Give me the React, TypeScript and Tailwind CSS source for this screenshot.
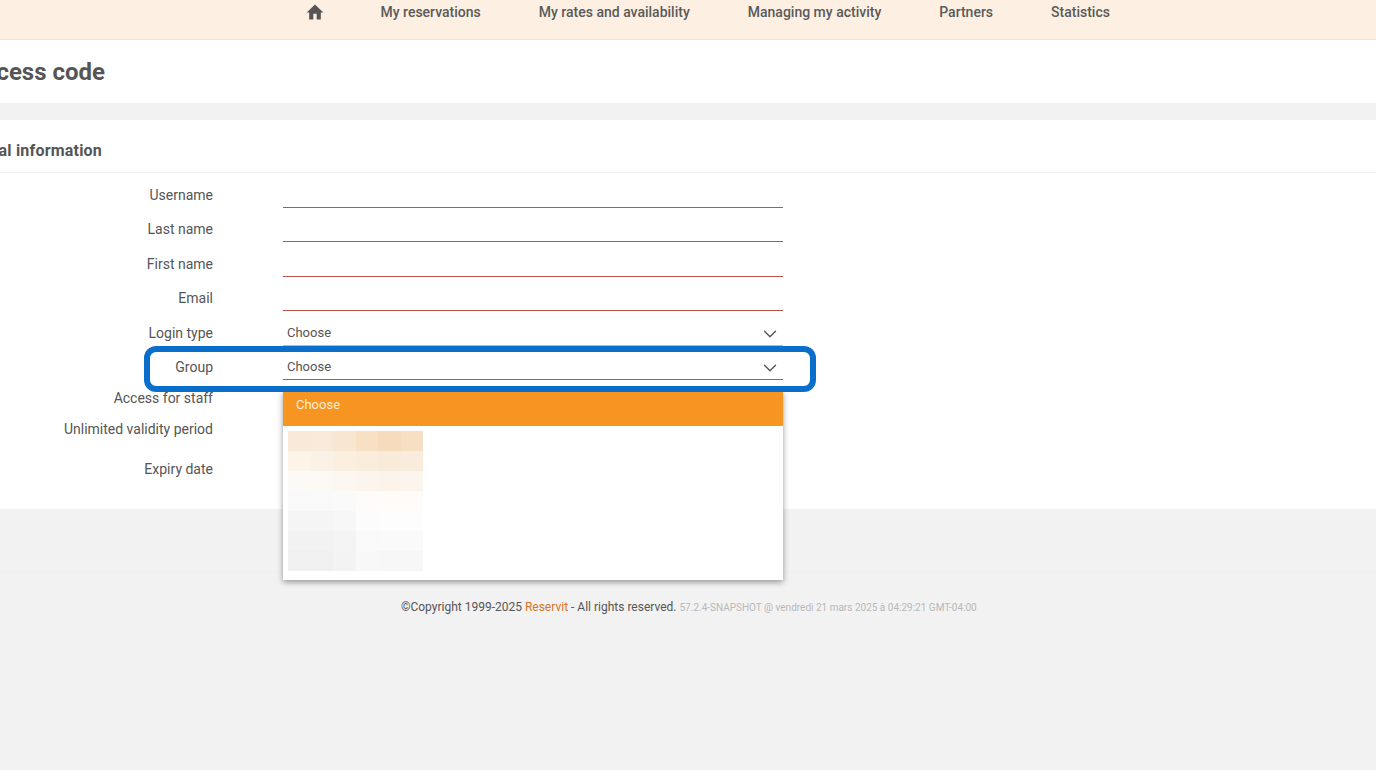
import { ChevronDown } from 'lucide-react'

const navLinks = ['My reservations', 'My rates and availability', 'Managing my activity', 'Partners', 'Statistics']

const textRows = [
  { label: 'Username', cls: 'h-[34px]' },
  { label: 'Last name', cls: 'h-[35px]' },
  { label: 'First name', cls: 'h-[34px]' },
  { label: 'Email', cls: 'h-[35px]' },
]

const mosaic = [
  ['#f9e9d8', '#f9ead9', '#f8e6d0', '#f7e0c4', '#f6dcbc', '#f6dfc2'],
  ['#fcf3e9', '#fbf2e7', '#fbefe0', '#faeddc', '#f9ebd9', '#f9ecdc'],
  ['#fcfaf7', '#fcf9f5', '#fcf7f1', '#fcf5ed', '#fcf4eb', '#fcf5ee'],
  ['#f9f9f9', '#f9f9f9', '#fafafa', '#fdfcfa', '#fefbf8', '#fefcf9'],
  ['#f5f5f5', '#f5f5f5', '#f7f7f7', '#fcfcfc', '#fdfdfd', '#fdfdfd'],
  ['#f2f2f2', '#f2f2f2', '#f4f4f4', '#f9f9f9', '#fafafa', '#fafafa'],
  ['#f0f0f0', '#f0f0f0', '#f3f3f3', '#f8f8f8', '#f7f7f7', '#f7f7f7'],
]

function HomeIcon() {
  return (
    <svg viewBox="0 0 24 24" className="w-[20px] h-[20px] -mt-[2px] fill-[#555]">
      <path d="M10 21v-7h4v7h5v-8.5h3L12 3 2 12.5h3V21z" />
    </svg>
  )
}

function SelectField({ line }: { line: string }) {
  return (
    <div className={`w-[500px] h-[31px] pt-[6px] pl-[4px] pr-[2px] flex items-center justify-between border-b ${line}`}>
      <span className="text-[13px] text-[#555]">Choose</span>
      <ChevronDown className="w-[22px] h-[22px] mt-[1px] text-[#555]" strokeWidth={1.5} />
    </div>
  )
}

export default function App() {
  return (
    <div className="relative w-[1376px] h-[770px] overflow-hidden bg-[#f2f2f2] font-['Roboto',sans-serif] text-[#555]">
      {/* Top nav */}
      <nav className="h-[40px] bg-[#fdf0e2] border-b border-[#ece4da] pl-[305px] flex items-center pb-[14px]">
        <div className="w-[75.5px]"><HomeIcon /></div>
        <div className="flex items-center gap-[58px]">
          {navLinks.map((link) => (
            <span key={link} className="text-[14px] font-medium text-[#5a5a5a] whitespace-nowrap">{link}</span>
          ))}
        </div>
      </nav>

      {/* Page title, cut off by the left edge */}
      <div className="h-[63px] bg-white flex items-center pt-[1px]">
        <div className="w-[105px] flex justify-end">
          <h1 className="text-[24px] font-bold text-[#555] whitespace-nowrap">Access code</h1>
        </div>
      </div>

      <div className="h-[17px]" />

      {/* Form card */}
      <section className="h-[389px] bg-white">
        <div className="h-[53px] border-b border-[#efefef] flex items-center pt-[10px]">
          <div className="w-[102px] flex justify-end">
            <h2 className="text-[16px] font-bold text-[#555] whitespace-nowrap tracking-[0.2px]">General information</h2>
          </div>
        </div>

        <div className="pt-[4px]">
          {textRows.map((row) => (
            <div key={row.label} className={`flex items-start ${row.cls}`}>
              <label className="w-[213px] pt-[8px] text-right text-[14px] leading-[20px]">{row.label}</label>
              <div className="ml-[70px] w-[500px] h-[31px] border-b border-[#c0504d]" />
            </div>
          ))}
          <div className="flex items-start h-[34px]">
            <label className="w-[213px] pt-[8px] text-right text-[14px] leading-[20px]">Login type</label>
            <div className="ml-[70px]"><SelectField line="border-[#bbb]" /></div>
          </div>
          <div className="flex items-start h-[34px]">
            <label className="w-[213px] pt-[8px] text-right text-[14px] leading-[20px]">Group</label>
            <div className="ml-[70px]"><SelectField line="border-[#c4561f]" /></div>
          </div>
          <label className="block w-[213px] pt-[5px] h-[31px] text-right text-[14px] leading-[20px]">Access for staff</label>
          <label className="block w-[213px] pt-[5px] h-[40px] text-right text-[14px] leading-[20px]">Unlimited validity period</label>
          <label className="block w-[213px] pt-[5px] text-right text-[14px] leading-[20px]">Expiry date</label>
        </div>
      </section>

      {/* Footer */}
      <div className="h-[63px] border-b border-[#f0f0f0]" />
      <footer className="pt-[26px] pl-[401px] flex items-baseline gap-[3px] whitespace-nowrap">
        <span className="text-[12px] text-[#555]">
          ©Copyright 1999-2025 <span className="text-[#d9741f]">Reservit</span> - All rights reserved.
        </span>
        <span className="text-[10px] text-[#b8b8b8]">57.2.4-SNAPSHOT @ vendredi 21 mars 2025 à 04:29:21 GMT-04:00</span>
      </footer>

      {/* Open dropdown */}
      <div className="absolute left-[283px] top-[391px] w-[500px] h-[189px] bg-white shadow-[0_2px_6px_rgba(0,0,0,0.4)]">
        <div className="h-[35px] bg-[#f79522] pl-[13px] pt-[5px] text-[13px] leading-[18px] text-[#fdebd3]">Choose</div>
        <div className="mt-[5px] ml-[5px] w-[135px] h-[140px] grid grid-cols-6 grid-rows-7">
          {mosaic.flat().map((color, i) => (
            <div key={i} style={{ backgroundColor: color }} />
          ))}
        </div>
      </div>

      {/* Highlight around the Group row */}
      <div className="absolute left-[144px] top-[346px] w-[672px] h-[46px] rounded-[12px] border-[6px] border-[#0a6ecb]" />
    </div>
  )
}
